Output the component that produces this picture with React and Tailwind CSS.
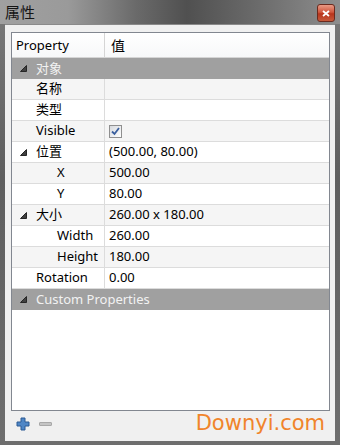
const font = "font-['Noto_Sans','Noto_Sans_CJK_SC',sans-serif]";

const Arrow = () => (
  <svg width="7" height="7" viewBox="0 0 7 7" className="shrink-0">
    <polygon
      points="6.5,0.5 6.5,6.5 0.5,6.5"
      fill="#404040"
      stroke="#262626"
      strokeWidth="1"
      strokeLinejoin="round"
    />
  </svg>
);

const CheckBox = () => (
  <div className="w-[13px] h-[13px] border border-[#8f8f8f] bg-[linear-gradient(135deg,#d6d9de,#ffffff)] flex items-center justify-center">
    <svg width="9" height="9" viewBox="0 0 9 9">
      <path d="M1 4.5 L3.5 7 L8 1" fill="none" stroke="#3a5f9e" strokeWidth="1.8" />
    </svg>
  </div>
);

const rows = [
  { type: "group", name: "对象" },
  { name: "名称", value: "", indent: 1 },
  { name: "类型", value: "", indent: 1 },
  { name: "Visible", value: <CheckBox />, indent: 1 },
  { name: "位置", value: "(500.00, 80.00)", indent: 1, arrow: true },
  { name: "X", value: "500.00", indent: 2 },
  { name: "Y", value: "80.00", indent: 2 },
  { name: "大小", value: "260.00 x 180.00", indent: 1, arrow: true },
  { name: "Width", value: "260.00", indent: 2 },
  { name: "Height", value: "180.00", indent: 2 },
  { name: "Rotation", value: "0.00", indent: 1 },
  { type: "group", name: "Custom Properties" },
];

const Row = ({ row, index }) => {
  if (row.type === "group") {
    return (
      <div className="h-[21px] bg-[#a0a0a0] flex items-center pl-[8px] text-[#f2f2f2]">
        <Arrow />
        <span className="ml-[9px]">{row.name}</span>
      </div>
    );
  }
  const stripe = index % 2 === 1 ? "bg-[#f5f5f5]" : "bg-white";
  return (
    <div className={`h-[21px] flex border-b border-[#dcdcdc] ${stripe}`}>
      <div
        className={`w-[93px] shrink-0 flex items-center border-r border-[#dcdcdc] ${
          row.indent === 2 ? "pl-[45px]" : "pl-[8px]"
        }`}
      >
        {row.indent === 1 && (
          <span className="w-[16px] flex">{row.arrow && <Arrow />}</span>
        )}
        <span>{row.name}</span>
      </div>
      <div className="flex-1 flex items-center pl-[4px]">{row.value}</div>
    </div>
  );
};

export default function App() {
  return (
    <div
      className={`w-[340px] h-[445px] flex flex-col text-[13px] text-black ${font} bg-[linear-gradient(180deg,#7a7a7a,#5e5e5e_40%,#6e6e6e)]`}
    >
      <div className="h-[24px] shrink-0 flex items-center justify-between pl-[5px] pr-[5px] bg-[linear-gradient(90deg,#a0a0a0_0%,#9a9a9a_20%,#6a6a6a_40%,#505050_55%,#6a6a6a_75%,#8e8e8e_100%)]">
        <span className="text-[15px] text-[#151515]">属性</span>
        <div className="w-[18px] h-[18px] rounded-[3px] border border-[#6b2a1e] bg-[linear-gradient(180deg,#e89a85,#d0573e_45%,#b8341c_55%,#c75a3b)] flex items-center justify-center mt-[2px]">
          <svg width="8" height="7" viewBox="0 0 8 7">
            <path d="M1 1 L7 6 M7 1 L1 6" stroke="white" strokeWidth="1.8" />
          </svg>
        </div>
      </div>
      <div className="flex-1 mx-[5px] mb-[4px] bg-[#f0f0f0] border-t border-[#8a8a8a] pt-[7px] pl-[6px] pr-[5px] flex flex-col">
        <div className="h-[379px] border border-[#828790] bg-white flex flex-col">
          <div className="h-[25px] shrink-0 flex border-b border-[#d5d5d5] bg-[linear-gradient(180deg,#ffffff,#f7f8f9)]">
            <div className="w-[93px] shrink-0 flex items-center pl-[4px] pt-[1px] border-r border-[#d5d5d5]">
              Property
            </div>
            <div className="flex items-center pl-[6px] pt-[1px] text-[14px]">值</div>
          </div>
          {rows.map((row, i) => (
            <Row key={i} row={row} index={i} />
          ))}
        </div>
        <div className="flex-1 flex items-center pl-[5px] pb-[5px]">
          <svg width="14" height="14" viewBox="0 0 14 14">
            <path
              d="M5 1 H9 V5 H13 V9 H9 V13 H5 V9 H1 V5 H5 Z"
              fill="#4f86c6"
              stroke="#2c5b94"
              strokeWidth="1"
            />
          </svg>
          <div className="ml-[9px] w-[13px] h-[4px] rounded-[1px] bg-[#c4c4c4] border border-[#a8a8a8]" />
          <span className="ml-auto mr-[5px] text-[21px] text-[#f0842a] font-['DejaVu_Sans',sans-serif] leading-none">
            Downyi.com
          </span>
        </div>
      </div>
    </div>
  );
}
